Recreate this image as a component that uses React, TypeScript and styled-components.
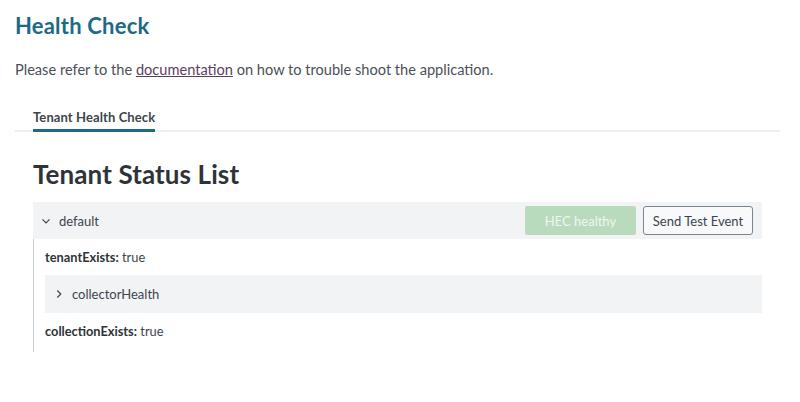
import React, { useState } from 'react';
import styled, { createGlobalStyle } from 'styled-components';

const GlobalStyle = createGlobalStyle`
  body {
    margin: 0;
    background: #ffffff;
    font-family: Lato, "Liberation Sans", sans-serif;
    color: #3c444d;
  }
`;

const Chevron = ({ open }: { open: boolean }) => (
  <svg width="10" height="10" viewBox="0 0 10 10" fill="none">
    {open
      ? <path d="M1.5 3.3 L5 6.8 L8.5 3.3" stroke="#3c444d" strokeWidth="1.2" />
      : <path d="M3.3 1.5 L6.8 5 L3.3 8.5" stroke="#3c444d" strokeWidth="1.2" />}
  </svg>
);

const App = () => {
  const [open, setOpen] = useState(true);
  const [childOpen, setChildOpen] = useState(false);
  return (
    <Page>
      <GlobalStyle />
      <Title>Health Check</Title>
      <Intro>
        Please refer to the <DocLink href="#">documentation</DocLink> on how to trouble shoot the application.
      </Intro>
      <TabBar>
        <Tab active>Tenant Health Check</Tab>
      </TabBar>
      <Content>
        <Heading>Tenant Status List</Heading>
        <PanelHead>
          <Toggle onClick={() => setOpen(!open)}>
            <Chevron open={open} />
            <span>default</span>
          </Toggle>
          <Actions>
            <HealthyButton disabled>HEC healthy</HealthyButton>
            <OutlineButton>Send Test Event</OutlineButton>
          </Actions>
        </PanelHead>
        {open && (
          <PanelBody>
            <Field><b>tenantExists:</b> true</Field>
            <SubHead>
              <Toggle onClick={() => setChildOpen(!childOpen)}>
                <Chevron open={childOpen} />
                <span>collectorHealth</span>
              </Toggle>
            </SubHead>
            <Field><b>collectionExists:</b> true</Field>
          </PanelBody>
        )}
      </Content>
    </Page>
  );
};

const Page = styled.div`
  padding: 12px 20px 0 15px;
`;

const Title = styled.h1`
  margin: 0;
  font-size: 22px;
  line-height: 28px;
  font-weight: 700;
  letter-spacing: 0.2px;
  color: #1b6a86;
`;

const Intro = styled.p`
  margin: 20px 0 0;
  font-size: 14.6px;
  line-height: 20px;
  color: #4a5058;
`;

const DocLink = styled.a`
  color: #5b3f5e;
  text-decoration: underline;
`;

const TabBar = styled.div`
  display: flex;
  margin-top: 29px;
  padding-left: 18px;
  border-bottom: 2px solid #eceeef;
`;

const Tab = styled.div<{ active?: boolean }>`
  font-size: 13px;
  font-weight: 700;
  line-height: 16px;
  letter-spacing: 0.1px;
  color: #3c444d;
  padding-bottom: 4px;
  margin-bottom: -2px;
  border-bottom: 3px solid ${p => (p.active ? '#1b6a86' : 'transparent')};
`;

const Content = styled.div`
  padding: 0 18px;
`;

const Heading = styled.h2`
  margin: 26px 0 0;
  font-size: 26px;
  line-height: 32px;
  font-weight: 700;
  letter-spacing: 0.1px;
  color: #2e3338;
`;

const PanelHead = styled.div`
  display: flex;
  align-items: center;
  justify-content: space-between;
  height: 37px;
  margin-top: 12px;
  padding: 0 9px 0 8px;
  background: #f2f3f4;
`;

const Toggle = styled.div`
  display: flex;
  align-items: center;
  gap: 8px;
  font-size: 13px;
  color: #3c444d;
  cursor: pointer;
`;

const Actions = styled.div`
  display: flex;
  gap: 7px;
`;

const HealthyButton = styled.button`
  width: 111px;
  height: 29px;
  border: none;
  border-radius: 2px;
  background: #b8dbbe;
  color: #eef7ef;
  font-family: inherit;
  font-size: 13px;
`;

const OutlineButton = styled.button`
  width: 110px;
  height: 29px;
  border: 1px solid #7d848c;
  border-radius: 3px;
  background: #f8f9fa;
  color: #3c444d;
  font-family: inherit;
  font-size: 13px;
  cursor: pointer;
`;

const PanelBody = styled.div`
  display: flex;
  flex-direction: column;
  border-left: 1px solid #c9ccd0;
  padding: 0 0 3px 11px;
`;

const Field = styled.div`
  font-size: 12.8px;
  line-height: 36px;
  color: #3c444d;
  b {
    font-weight: 700;
    color: #2e3338;
  }
`;

const SubHead = styled.div`
  display: flex;
  align-items: center;
  height: 38px;
  padding-left: 9px;
  background: #f2f3f4;
`;

export default App;
